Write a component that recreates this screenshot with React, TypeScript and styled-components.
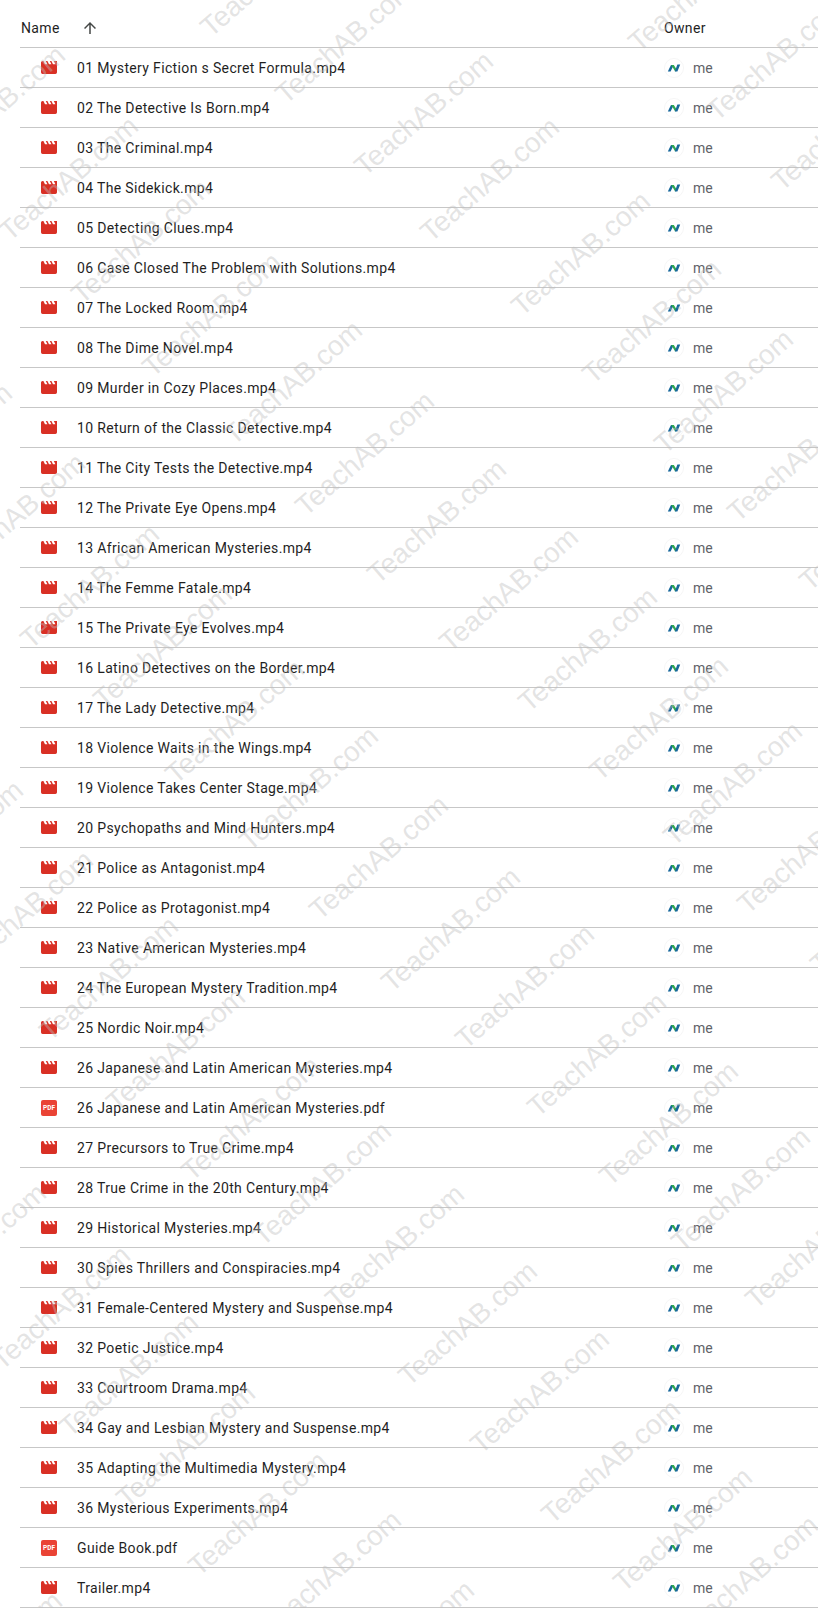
import styled, { createGlobalStyle } from "styled-components";

const GlobalStyle = createGlobalStyle`
	html, body {
		margin: 0;
		padding: 0;
		background: #fff;
	}
	body {
		font-family: Roboto, "Noto Sans", sans-serif;
		overflow: hidden;
	}
`;

const Page = styled.div`
	position: relative;
	width: 818px;
	height: 1608px;
	overflow: hidden;
	background: #fff;
`;

const List = styled.div`
	padding-left: 20px;
`;

const HeaderRow = styled.div`
	display: grid;
	grid-template-columns: 644px 1fr;
	align-items: center;
	height: 39px;
	padding-top: 8px;
	border-bottom: 1px solid #c7c7c7;
	font-size: 14px;
	letter-spacing: 0.35px;
	color: #1f1f1f;
`;

const SortCell = styled.div`
	display: flex;
	align-items: center;
	gap: 21px;
	padding-left: 1px;
`;

const Row = styled.div`
	display: grid;
	grid-template-columns: 644px 1fr;
	align-items: center;
	height: 39px;
	border-bottom: 1px solid #c7c7c7;
`;

const NameCell = styled.div`
	display: flex;
	align-items: center;
	gap: 20px;
	padding-left: 21px;
	font-size: 14px;
	letter-spacing: 0.35px;
	color: #1f1f1f;
`;

const OwnerCell = styled.div`
	display: flex;
	align-items: center;
	gap: 9px;
	font-size: 14px;
	color: #5f6368;
`;

const PdfBadge = styled.div`
	display: flex;
	align-items: center;
	justify-content: center;
	flex: none;
	width: 16px;
	height: 16px;
	border-radius: 2px;
	background: #ea4335;
	color: #fff;
	font-size: 6.5px;
	font-weight: 700;
	letter-spacing: 0;
`;

const Mark = styled.div.attrs<{ $x: number; $y: number }>((p) => ({
	style: { left: p.$x + 13, top: p.$y - 19 },
}))<{ $x: number; $y: number }>`
	position: absolute;
	height: 28px;
	line-height: 28px;
	font-size: 28px;
	font-family: "Liberation Sans", Arial, sans-serif;
	color: rgba(190, 190, 190, 0.42);
	white-space: nowrap;
	transform-origin: 0 100%;
	transform: rotate(-41deg);
	pointer-events: none;
`;

const files = [
	"01 Mystery Fiction s Secret Formula.mp4",
	"02 The Detective Is Born.mp4",
	"03 The Criminal.mp4",
	"04 The Sidekick.mp4",
	"05 Detecting Clues.mp4",
	"06 Case Closed The Problem with Solutions.mp4",
	"07 The Locked Room.mp4",
	"08 The Dime Novel.mp4",
	"09 Murder in Cozy Places.mp4",
	"10 Return of the Classic Detective.mp4",
	"11 The City Tests the Detective.mp4",
	"12 The Private Eye Opens.mp4",
	"13 African American Mysteries.mp4",
	"14 The Femme Fatale.mp4",
	"15 The Private Eye Evolves.mp4",
	"16 Latino Detectives on the Border.mp4",
	"17 The Lady Detective.mp4",
	"18 Violence Waits in the Wings.mp4",
	"19 Violence Takes Center Stage.mp4",
	"20 Psychopaths and Mind Hunters.mp4",
	"21 Police as Antagonist.mp4",
	"22 Police as Protagonist.mp4",
	"23 Native American Mysteries.mp4",
	"24 The European Mystery Tradition.mp4",
	"25 Nordic Noir.mp4",
	"26 Japanese and Latin American Mysteries.mp4",
	"26 Japanese and Latin American Mysteries.pdf",
	"27 Precursors to True Crime.mp4",
	"28 True Crime in the 20th Century.mp4",
	"29 Historical Mysteries.mp4",
	"30 Spies Thrillers and Conspiracies.mp4",
	"31 Female-Centered Mystery and Suspense.mp4",
	"32 Poetic Justice.mp4",
	"33 Courtroom Drama.mp4",
	"34 Gay and Lesbian Mystery and Suspense.mp4",
	"35 Adapting the Multimedia Mystery.mp4",
	"36 Mysterious Experiments.mp4",
	"Guide Book.pdf",
	"Trailer.mp4",
];

// bottom-left corner of each watermark
const marks = [
	[201, 33], [276, 100], [355, 172], [421, 238], [512, 312], [583, 380],
	[629, 48], [707, 117], [772, 187], [-73, 166], [0, 237], [72, 300],
	[143, 373], [-126, 504], [224, 441], [296, 512], [368, 580], [440, 648],
	[519, 708], [590, 777], [655, 450], [728, 518], [800, 587], [21, 645],
	[94, 705], [166, 780], [240, 847], [310, 916], [-115, 901], [664, 842],
	[-53, 574], [382, 988], [456, 1045], [528, 1113], [600, 1182], [738, 910],
	[811, 970], [-45, 971], [40, 1037], [107, 1108], [182, 1177], [253, 1242],
	[326, 1305], [-92, 1304], [672, 1248], [399, 1382], [471, 1450], [542, 1520],
	[614, 1588], [746, 1305], [60, 1433], [117, 1504], [189, 1572], [263, 1631],
	[336, 1701], [-76, 1712], [680, 1636], [-8, 1366],
];

const VideoIcon = () => (
	<svg width="16" height="13" viewBox="2 4 20 16" style={{ flex: "none" }}>
		<path
			fill="#d93025"
			d="M18 4l2 4h-3l-2-4h-2l2 4h-3l-2-4H8l2 4H7L5 4H4c-1.1 0-1.99.9-1.99 2L2 18c0 1.1.9 2 2 2h16c1.1 0 2-.9 2-2V4h-4z"
		/>
	</svg>
);

const ArrowUp = () => (
	<svg width="18" height="18" viewBox="0 0 24 24">
		<path
			fill="#444746"
			d="M4 12l1.41 1.41L11 7.83V20h2V7.83l5.58 5.59L20 12l-8-8-8 8z"
		/>
	</svg>
);

const Avatar = () => (
	<svg width="20" height="20" viewBox="0 0 20 20" style={{ flex: "none" }}>
		<circle cx="10" cy="10" r="9.5" fill="#fff" stroke="#f6f6f6" />
		<path d="M3.8 13.6 L7 7 L9.8 7 L6.6 13.6 Z" fill="#17679c" />
		<path d="M7.2 7 L9.8 7 L13 12 L11.2 13.6 Z" fill="#2fa84f" />
		<path d="M10.8 13.6 L13.4 6.4 L16.2 6.4 L13.4 13.6 Z" fill="#17679c" />
	</svg>
);

export default function App() {
	return (
		<Page>
			<GlobalStyle />
			<List>
				<HeaderRow>
					<SortCell>
						Name
						<ArrowUp />
					</SortCell>
					<div>Owner</div>
				</HeaderRow>
				{files.map((name) => (
					<Row key={name}>
						<NameCell>
							{name.endsWith(".pdf") ? <PdfBadge>PDF</PdfBadge> : <VideoIcon />}
							{name}
						</NameCell>
						<OwnerCell>
							<Avatar />
							me
						</OwnerCell>
					</Row>
				))}
			</List>
			{marks.map(([x, y]) => (
				<Mark key={`${x}-${y}`} $x={x} $y={y}>
					TeachAB.com
				</Mark>
			))}
		</Page>
	);
}
